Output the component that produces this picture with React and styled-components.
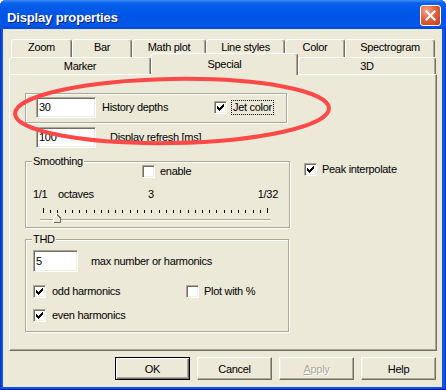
import React from 'react';
import styled, { createGlobalStyle, css } from 'styled-components';

const Global = createGlobalStyle`
  html, body { margin: 0; padding: 0; background: #ffffff; }
  body {
    font-family: "Liberation Sans", Arial, sans-serif;
    font-size: 11px;
    letter-spacing: -0.3px;
    color: #000;
  }
  * { box-sizing: border-box; }
`;

const Window = styled.div`
  position: relative;
  width: 446px;
  height: 390px;
  display: flex;
  flex-direction: column;
  background: #0855EA;
  border-radius: 6px 6px 0 0;
  overflow: hidden;
  box-shadow: inset 1px 0 #0A32B8, inset -1px 0 #0A32B8, inset 0 -1px #00148A;
`;

const TitleBar = styled.div`
  flex: none;
  height: 29px;
  display: flex;
  align-items: flex-start;
  justify-content: space-between;
  padding: 0 5px 0 7px;
  background: linear-gradient(180deg, #3D8EF8 0px, #0B62EC 3px, #0059E8 9px, #0054E3 18px, #0059EA 25px, #004BD6 29px);
`;

const Title = styled.span`
  margin-top: 10px;
  line-height: 15px;
  font-size: 13px;
  font-weight: bold;
  letter-spacing: -0.15px;
  color: #fff;
  text-shadow: 1px 1px #0A1C80;
`;

const CloseButton = styled.div`
  width: 21px;
  height: 21px;
  margin-top: 5px;
  border: 1px solid #fff;
  border-radius: 3px;
  background: radial-gradient(circle at 30% 25%, #F4A78C 0%, #E2603C 45%, #C8391B 100%);
  display: flex;
  align-items: center;
  justify-content: center;
`;

const Client = styled.div`
  flex: 1;
  margin: 0 4px 3px 3px;
  background: #ECE9D8;
  display: flex;
  flex-direction: column;
  padding-top: 10px;
`;

const TabRow = styled.div`
  display: flex;
  align-items: flex-end;
  height: ${(p) => p.$h}px;
  margin-left: ${(p) => p.$indent}px;
`;

const Tab = styled.div`
  flex: none;
  width: ${(p) => p.$w}px;
  height: ${(p) => (p.$selected ? 22 : p.$h)}px;
  margin-bottom: ${(p) => (p.$selected ? -1 : 0)}px;
  padding-bottom: ${(p) => p.$pb || 0}px;
  ${(p) => p.$selected && css`position: relative; z-index: 1;`}
  background: #ECE9D8;
  border-top: 1px solid #fff;
  border-left: 1px solid #fff;
  border-right: 1px solid #716F64;
  box-shadow: inset -1px 0 #ACA899;
  border-radius: 3px 3px 0 0;
  display: flex;
  align-items: center;
  justify-content: center;
  white-space: nowrap;
`;

const Panel = styled.div`
  width: 428px;
  height: 277px;
  margin-left: 6px;
  border: 1px solid;
  border-color: #fff #716F64 #716F64 #fff;
  box-shadow: inset -1px -1px #ACA899;
  padding: 18px 0 0 15px;
  display: flex;
  flex-direction: column;
  align-items: flex-start;
`;

const GroupBox = styled.div`
  position: relative;
  flex: none;
  width: ${(p) => p.$w}px;
  height: ${(p) => p.$h}px;
  margin-top: ${(p) => p.$mt || 0}px;
  border: 1px solid #ACA899;
  box-shadow: inset 1px 1px #fff, 1px 1px #fff;
  padding: ${(p) => p.$pad || '0'};
  display: flex;
  flex-direction: ${(p) => p.$dir || 'column'};
  align-items: flex-start;
`;

const Legend = styled.span`
  position: absolute;
  top: -7px;
  left: 6px;
  padding: 0 1px;
  line-height: 13px;
  background: #ECE9D8;
`;

const Row = styled.div`
  display: flex;
  align-items: center;
  flex: none;
  height: ${(p) => p.$h}px;
  margin-top: ${(p) => p.$mt || 0}px;
  padding-left: ${(p) => p.$pl || 0}px;
`;

const TextBox = styled.div`
  flex: none;
  width: ${(p) => p.$w}px;
  height: ${(p) => p.$h}px;
  background: #fff;
  border: 1px solid;
  border-color: #ACA899 #fff #fff #ACA899;
  box-shadow: inset 1px 1px #716F64, inset -1px -1px #F1EFE2;
  padding-left: 2px;
  line-height: ${(p) => p.$h - 2}px;
`;

const Text = styled.span`
  flex: none;
  margin-left: ${(p) => p.$ml || 0}px;
  width: ${(p) => (p.$w ? `${p.$w}px` : 'auto')};
  line-height: 13px;
  white-space: nowrap;
`;

const FocusText = styled.span`
  margin-left: ${(p) => p.$ml || 0}px;
  padding: 0 1px;
  border: 1px dotted #000;
  line-height: 13px;
  white-space: nowrap;
`;

const Box = styled.span`
  flex: none;
  display: block;
  width: 13px;
  height: 13px;
  background: #fff;
  border: 1px solid;
  border-color: #ACA899 #fff #fff #ACA899;
  box-shadow: inset 1px 1px #716F64, inset -1px -1px #F1EFE2;
`;

const CheckItem = styled.div`
  display: flex;
  align-items: center;
  flex: none;
  width: ${(p) => (p.$w ? `${p.$w}px` : 'auto')};
  margin-top: ${(p) => p.$mt || 0}px;
  margin-left: ${(p) => p.$ml || 0}px;
`;

const MiddleRow = styled.div`
  display: flex;
  align-items: flex-start;
  margin-top: 13px;
`;

const ScaleRow = styled.div`
  display: flex;
  align-self: stretch;
  height: 13px;
  line-height: 13px;
  margin-top: 10px;
  padding: 0 11px 0 7px;
`;

const ScaleLabel = styled.span`
  flex: none;
  width: ${(p) => (p.$w ? `${p.$w}px` : 'auto')};
  margin-left: ${(p) => (p.$push ? 'auto' : '0')};
`;

const Ticks = styled.div`
  display: flex;
  align-items: flex-end;
  height: 5px;
  margin-top: 7px;
  padding-left: 17px;
`;

const Tick = styled.span`
  flex: none;
  width: 1px;
  height: ${(p) => (p.$long ? 5 : 3)}px;
  margin-left: ${(p) => p.$gap}px;
  background: #000;
`;

const Track = styled.div`
  position: relative;
  width: 231px;
  height: 2px;
  margin: 6px 0 0 14px;
  border-top: 1px solid #ACA899;
  border-bottom: 1px solid #fff;
`;

const Thumb = styled.svg`
  position: absolute;
  top: -6px;
  display: block;
`;

const ButtonRow = styled.div`
  display: flex;
  justify-content: flex-end;
  gap: 7px;
  margin: 6px 6px 0 0;
`;

const Button = styled.button`
  width: 75px;
  height: 23px;
  padding: 0;
  font: inherit;
  letter-spacing: inherit;
  background: #ECE9D8;
  border: 1px solid;
  border-color: #fff #716F64 #716F64 #fff;
  box-shadow: inset -1px -1px #ACA899, inset 1px 1px #F1EFE2;
  color: ${(p) => (p.disabled ? '#ACA899' : '#000')};
  text-shadow: ${(p) => (p.disabled ? '1px 1px #fff' : 'none')};
  ${(p) =>
    p.$default &&
    css`
      border-color: #000;
      box-shadow: inset 1px 1px #fff, inset -1px -1px #716F64, inset -2px -2px #ACA899;
    `}
`;

const Annotation = styled.svg`
  position: absolute;
  left: 0;
  top: 0;
  pointer-events: none;
`;

function Check({ checked }) {
  return (
    <Box>
      {checked && (
        <svg width="11" height="11" viewBox="1 1 11 11" shapeRendering="crispEdges" style={{ display: 'block' }}>
          <polygon
            fill="#000"
            points="3,5 4,5 4,6 5,6 5,7 6,7 6,6 7,6 7,5 8,5 8,4 9,4 9,3 10,3 10,6 9,6 9,7 8,7 8,8 7,8 7,9 6,9 6,10 5,10 5,9 4,9 4,8 3,8"
          />
        </svg>
      )}
    </Box>
  );
}

const row1 = [
  ['Zoom', 61],
  ['Bar', 60],
  ['Math plot', 74],
  ['Line styles', 79],
  ['Color', 60],
  ['Spectrogram', 90],
];
const row2 = [
  ['Marker', 142, false],
  ['Special', 147, true],
  ['3D', 138, false],
];

const tickX = Array.from({ length: 32 }, (_, i) => 43 + Math.round((i * 224) / 31));
const sliderValue = 2;

export default function App() {
  return (
    <>
      <Global />
      <Window>
        <TitleBar>
          <Title>Display properties</Title>
          <CloseButton>
            <svg width="11" height="11" viewBox="0 0 11 11">
              <path d="M1.5 1.5 L9.5 9.5 M9.5 1.5 L1.5 9.5" stroke="#fff" strokeWidth="2.2" strokeLinecap="square" />
            </svg>
          </CloseButton>
        </TitleBar>
        <Client>
          <TabRow $h={18} $indent={8}>
            {row1.map(([label, w]) => (
              <Tab key={label} $w={w} $h={18} $pb={3}>{label}</Tab>
            ))}
          </TabRow>
          <TabRow $h={17} $indent={6}>
            {row2.map(([label, w, sel]) => (
              <Tab key={label} $w={w} $h={17} $selected={sel} $pb={sel ? 2 : 0}>{label}</Tab>
            ))}
          </TabRow>
          <Panel>
            <GroupBox $w={262} $h={30} $dir="row" $pad="3px 0 0 10px">
              <Row $h={21}>
                <TextBox $w={60} $h={21}>30</TextBox>
                <Text $ml={6} $w={112}>History depths</Text>
                <Check checked />
                <FocusText $ml={4}>Jet color</FocusText>
              </Row>
            </GroupBox>
            <Row $h={21} $mt={4} $pl={11}>
              <TextBox $w={60} $h={21}>100</TextBox>
              <Text $ml={14}>Display refresh [ms]</Text>
            </Row>
            <MiddleRow>
              <GroupBox $w={265} $h={67}>
                <Legend>Smoothing</Legend>
                <CheckItem $mt={3} $ml={116}>
                  <Check />
                  <Text $ml={5}>enable</Text>
                </CheckItem>
                <ScaleRow>
                  <ScaleLabel $w={25}>1/1</ScaleLabel>
                  <ScaleLabel $w={90}>octaves</ScaleLabel>
                  <ScaleLabel>3</ScaleLabel>
                  <ScaleLabel $push>1/32</ScaleLabel>
                </ScaleRow>
                <Ticks>
                  {tickX.map((x, i) => (
                    <Tick
                      key={i}
                      $gap={i === 0 ? 0 : x - tickX[i - 1] - 1}
                      $long={i === 0 || i === tickX.length - 1}
                    />
                  ))}
                </Ticks>
                <Track>
                  <Thumb
                    width="8"
                    height="9"
                    viewBox="0 0 8 9"
                    shapeRendering="crispEdges"
                    style={{ left: tickX[sliderValue] - 40 - 4 }}
                  >
                    <polygon points="0,4 4,0 8,4 8,9 0,9" fill="#ECE9D8" />
                    <path d="M0.5 9V4L4 0.5" stroke="#fff" fill="none" />
                    <path d="M4 0.5L7.5 4V8.5H0.5" stroke="#716F64" fill="none" />
                  </Thumb>
                </Track>
              </GroupBox>
              <CheckItem $mt={2} $ml={14}>
                <Check checked />
                <Text $ml={5}>Peak interpolate</Text>
              </CheckItem>
            </MiddleRow>
            <GroupBox $w={264} $h={93} $mt={11}>
              <Legend>THD</Legend>
              <Row $h={22} $mt={10} $pl={7}>
                <TextBox $w={45} $h={22}>5</TextBox>
                <Text $ml={13}>max number or harmonics</Text>
              </Row>
              <Row $h={13} $mt={13} $pl={7}>
                <CheckItem $w={153}>
                  <Check checked />
                  <Text $ml={6}>odd harmonics</Text>
                </CheckItem>
                <CheckItem>
                  <Check />
                  <Text $ml={5}>Plot with %</Text>
                </CheckItem>
              </Row>
              <Row $h={13} $mt={11} $pl={7}>
                <CheckItem>
                  <Check checked />
                  <Text $ml={6}>even harmonics</Text>
                </CheckItem>
              </Row>
            </GroupBox>
          </Panel>
          <ButtonRow>
            <Button $default>OK</Button>
            <Button>Cancel</Button>
            <Button disabled><u>A</u>pply</Button>
            <Button>Help</Button>
          </ButtonRow>
        </Client>
        <Annotation width="446" height="390" viewBox="0 0 446 390">
          <ellipse
            cx="172"
            cy="111"
            rx="157"
            ry="32"
            transform="rotate(-1 172 111)"
            fill="none"
            stroke="#FF4848"
            strokeWidth="4"
          />
        </Annotation>
      </Window>
    </>
  );
}
